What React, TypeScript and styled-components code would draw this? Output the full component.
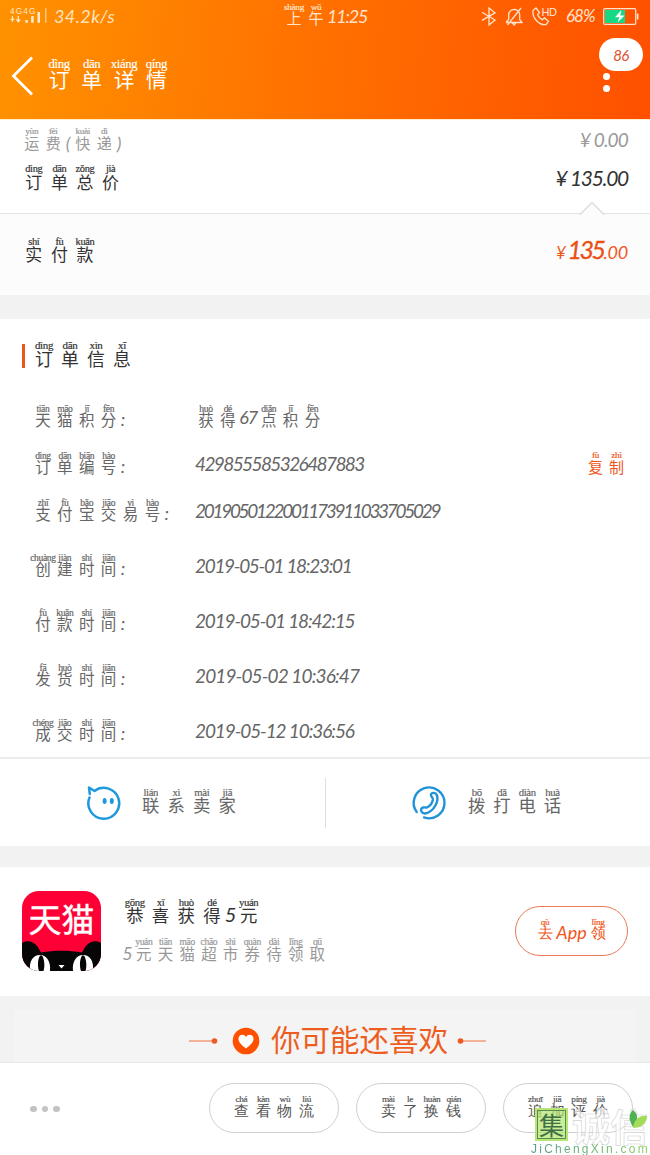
import React from "react";
import styled, { createGlobalStyle } from "styled-components";

const sans = `"Noto Sans CJK SC", "Liberation Sans", sans-serif`;
const numeric = `Lato, "Liberation Sans", sans-serif`;

const GlobalStyle = createGlobalStyle`
  * { box-sizing: border-box; }
  body { margin: 0; background: #f2f2f2; font-family: ${sans}; }
`;

/* ---------- annotated text ---------- */

const RubyLine = styled.span<{ $size: number; $color: string; $drop?: number }>`
  display: inline-flex;
  align-items: center;
  padding-top: ${(p) => p.$drop ?? 0}px;
  color: ${(p) => p.$color};
  font-size: ${(p) => p.$size}px;
  line-height: ${(p) => p.$size}px;
  font-weight: 400;
  white-space: nowrap;
`;

const Cell = styled.span<{ $pitch: number }>`
  display: inline-flex;
  flex-direction: column;
  align-items: center;
  width: ${(p) => p.$pitch}px;
`;

const Pinyin = styled.span<{ $size: number }>`
  font-family: "Liberation Serif", serif;
  font-size: ${(p) => p.$size * 0.58}px;
  line-height: ${(p) => p.$size * 0.6}px;
  margin-top: ${(p) => p.$size * -0.46}px;
  margin-bottom: ${(p) => p.$size * -0.14}px;
  letter-spacing: -0.35px;
  -webkit-text-stroke: 0.2px currentColor;
`;

const Hanzi = styled.span`
  font-size: 0.94em;
`;

const Plain = styled.span<{ $size?: number; $width?: number; $spacing?: number; $lift?: number }>`
  font-family: ${numeric};
  font-style: italic;
  text-align: center;
  font-size: ${(p) => p.$size ?? 18}px;
  width: ${(p) => (p.$width ? `${p.$width}px` : "auto")};
  letter-spacing: ${(p) => p.$spacing ?? 0}px;
  margin-bottom: ${(p) => p.$lift ?? 0}px;
`;

type Syllable = [string, string];

/* "订:dìng 单:dān" -> pairs of character and reading */
const parse = (text: string): Syllable[] =>
  text.split(" ").map((part) => part.split(":") as Syllable);

function Syllables({ text, size, pitch }: { text: string; size: number; pitch: number }) {
  return (
    <>
      {parse(text).map(([char, reading], i) => (
        <Cell key={i} $pitch={pitch}>
          <Pinyin $size={size}>{reading}</Pinyin>
          <Hanzi>{char}</Hanzi>
        </Cell>
      ))}
    </>
  );
}

function Ruby(props: { text: string; size: number; pitch: number; color: string }) {
  return (
    <RubyLine $size={props.size} $color={props.color}>
      <Syllables text={props.text} size={props.size} pitch={props.pitch} />
    </RubyLine>
  );
}

const Num = styled.span<{ $size: number; $color: string; $spacing?: number; $stroke?: number }>`
  font-family: ${numeric};
  font-style: italic;
  font-size: ${(p) => p.$size}px;
  line-height: 24px;
  color: ${(p) => p.$color};
  letter-spacing: ${(p) => p.$spacing ?? 0}px;
  -webkit-text-stroke: ${(p) => p.$stroke ?? 0}px currentColor;
  white-space: nowrap;
`;

/* ---------- page ---------- */

const Page = styled.main`
  position: relative;
  width: 650px;
  height: 1155px;
  overflow: hidden;
  display: flex;
  flex-direction: column;
  background: #f2f2f2;
`;

const Header = styled.header`
  height: 120px;
  flex: none;
  background: linear-gradient(96deg, #ff9200 0%, #ff7200 46%, #ff5000 100%);
  border-bottom: 1px solid #ffedcb;
  color: #fff;
`;

const StatusBar = styled.div`
  height: 32px;
  display: grid;
  grid-template-columns: 283px 198px 1fr;
  align-items: center;
  color: #ffe3bd;
`;

const StatusGroup = styled.div`
  display: flex;
  align-items: center;
  gap: 8px;
`;

const Network = styled(StatusGroup)`
  padding-left: 10px;
  gap: 5px;
`;

const TitleBar = styled.div`
  display: flex;
  align-items: center;
  height: 87px;
  padding: 0 40px 0 11px;
`;

const TitleText = styled.div`
  margin: 7px auto 0 9px;
  display: flex;
`;

const More = styled.div`
  display: flex;
  flex-direction: column;
  gap: 5px;
  margin-top: 13px;
`;

const MoreDot = styled.i`
  width: 7px;
  height: 7px;
  border-radius: 50%;
  background: #fff;
`;

const Badge = styled.div`
  position: absolute;
  left: 599px;
  top: 38px;
  width: 44px;
  height: 33px;
  border-radius: 17px;
  background: #fff;
  display: flex;
  align-items: center;
  justify-content: center;
`;

const Totals = styled.section`
  height: 93px;
  flex: none;
  background: #fff;
  padding: 4px 22px 0 21px;
`;

const PriceRow = styled.div<{ $height: number }>`
  display: flex;
  justify-content: space-between;
  align-items: center;
  height: ${(p) => p.$height}px;
`;

const RowLabel = styled.div<{ $shift?: number }>`
  display: flex;
  padding-top: ${(p) => p.$shift ?? 5}px;
`;

const Paid = styled.section`
  position: relative;
  height: 82px;
  flex: none;
  background: #fcfcfc;
  border-top: 1px solid #e2e2e2;
  padding: 0 22px 0 21px;
`;

const Notch = styled.svg`
  position: absolute;
  left: 579px;
  top: -13px;
`;

const Amount = styled.div`
  display: flex;
  align-items: baseline;
`;

const Info = styled.section`
  height: 440px;
  flex: none;
  margin-top: 24px;
  background: #fff;
  padding: 0 23px 0 22px;
  border-bottom: 2px solid #ececec;
`;

const InfoTitle = styled.h2`
  margin: 0 0 21px;
  padding-top: 17px;
  display: flex;
  align-items: center;
  gap: 6px;
  height: 56px;
`;

const Marker = styled.i`
  width: 3px;
  height: 24px;
  background: #f0531c;
`;

const InfoRow = styled.div<{ $height: number }>`
  display: grid;
  grid-template-columns: 163px 1fr auto;
  align-items: center;
  height: ${(p) => p.$height}px;
  padding-left: 10px;
`;

const TimeRows = styled.div`
  margin-top: 4px;
`;

const Value = styled.div`
  display: flex;
  padding-bottom: 5px;
`;

const Contact = styled.section`
  height: 87px;
  flex: none;
  background: #fff;
  display: grid;
  grid-template-columns: 1fr 1fr;
  align-items: center;
`;

const ContactItem = styled.div`
  display: flex;
  align-items: center;
  height: 50px;
  padding-left: 84px;
  gap: 16px;
  & + & { border-left: 1px solid #dfdfdf; }
`;

const Promo = styled.section`
  height: 129px;
  flex: none;
  margin-top: 21px;
  background: #fff;
  display: flex;
  align-items: center;
  padding: 0 22px 2px 22px;
`;

const AppIcon = styled.div`
  width: 79px;
  height: 80px;
  border-radius: 17px;
  overflow: hidden;
  background: #fe0036;
  display: flex;
  flex-direction: column;
  justify-content: space-between;
  align-items: center;
`;

const AppName = styled.span`
  color: #fff;
  font-size: 33px;
  line-height: 40px;
  padding-top: 7px;
  -webkit-text-stroke: 0.4px #fff;
`;

const PromoText = styled.div`
  flex: 1;
  display: flex;
  flex-direction: column;
  align-items: flex-start;
  gap: 19px;
  padding: 5px 0 0 21px;
`;

const Pill = styled.button<{ $width: number; $line: string }>`
  width: ${(p) => p.$width}px;
  height: 50px;
  padding: 5px 0 0;
  border: 1.5px solid ${(p) => p.$line};
  border-radius: 25px;
  background: #fff;
  display: flex;
  align-items: center;
  justify-content: center;
`;

const Suggest = styled.section`
  height: 66px;
  flex: none;
  padding: 14px 14px 0;
`;

const SuggestInner = styled.div`
  height: 52px;
  background: #f4f4f4;
  display: flex;
  align-items: center;
  justify-content: center;
  padding: 10px 0 0 25px;
`;

const SuggestLead = styled.span`
  display: flex;
  align-items: center;
  gap: 14px;
`;

const SuggestTitle = styled.h2`
  margin: 0 9px 6px 11px;
  font-size: 29.5px;
  line-height: 34px;
  font-weight: 400;
  color: #ee5c20;
`;

const BottomBar = styled.footer`
  height: 93px;
  flex: none;
  background: #fff;
  border-top: 1px solid #e8e8e8;
  display: flex;
  align-items: center;
  gap: 17px;
  padding: 0 17px 2px 30px;
`;

const Ellipsis = styled.div`
  display: flex;
  gap: 5px;
  margin: 2px auto 0 0;
  i { width: 6.5px; height: 6.5px; border-radius: 50%; background: #c3c3c3; }
`;

const Watermark = styled.div`
  position: absolute;
  left: 531px;
  top: 1106px;
  width: 119px;
  height: 49px;
`;

const MarkRow = styled.div`
  display: flex;
  align-items: center;
  height: 37px;
  padding-left: 4px;
`;

const MarkBox = styled.span`
  width: 33px;
  height: 33px;
  background: rgba(180, 228, 110, 0.72);
  box-shadow: inset 0 0 0 2px #b5e677, inset 0 0 0 3px #5c8a4c;
  color: #3f7045;
  font-size: 25px;
  line-height: 32px;
  text-align: center;
`;

const MarkText = styled.span`
  margin-left: 4px;
  font-size: 38px;
  line-height: 36px;
  font-weight: 700;
  color: rgba(255, 255, 255, 0.7);
  -webkit-text-stroke: 0.6px #d2d2d2;
`;

const Leaf = styled.svg`
  position: absolute;
  left: 97px;
  top: 3px;
`;

const MarkUrl = styled.div`
  font-family: "Liberation Sans", sans-serif;
  font-size: 12px;
  line-height: 13px;
  letter-spacing: 2.25px;
  background: linear-gradient(90deg, #5b9c8c, #6fb56b 60%, #8fcf60);
  background-clip: text;
  color: transparent;
  white-space: nowrap;
`;

/* ---------- icons ---------- */

const SignalIcon = () => (
  <svg width="39" height="18" viewBox="0 0 40 18" fill="none" stroke="#ffe9cc">
    <g fill="#ffe9cc" stroke="none" fontFamily="Liberation Sans, sans-serif" fontSize="8.5">
      <text x="0" y="6.5" textLength="26">4G4G</text>
    </g>
    <path d="M2.500 9v6M.500 12.500h4M8.500 9v6M6.500 12.500l2 2.500 2-2.500" strokeWidth="1.300" />
    <path d="M17 13v3M23 9v7M29.500 5v11" strokeWidth="2.600" />
    <path d="M36.700 1v15" strokeWidth="1.400" opacity=".7" />
  </svg>
);

const BluetoothIcon = () => (
  <svg width="16" height="19" viewBox="0 0 16 19" fill="none" stroke="#ffe3cc" strokeWidth="1.300">
    <path d="M1 5.200 14 13l-6 5V1l6 4.800L1 13.400" />
  </svg>
);

const MuteIcon = () => (
  <svg width="18" height="19" viewBox="0 0 18 19" fill="none" stroke="#ffe3cc" strokeWidth="1.300">
    <path d="M1 15.500h16l-2.300-3V8c0-3-2.200-5.500-5.400-5.700C6 2.400 3.700 5 3.700 8v4.500L1 15.500M7.500 16l1.600 2 1.600-2M16 1 2.500 18" />
  </svg>
);

const CallIcon = () => (
  <svg width="27" height="19" viewBox="0 0 27 19" fill="none" stroke="#ffe3cc" strokeWidth="1.300">
    <path d="M2 3.500 5 1l3.500 4.500L6.500 7.600c1 2.500 2.500 4 4.800 5.200l2.200-1.900 4 3.500-2.500 3.200C8.500 18.500.8 11 2 3.500z" />
    <text x="10.500" y="8.500" fontFamily="Liberation Sans, sans-serif" fontSize="11" textLength="15.500" fill="#ffe9dc" stroke="none">HD</text>
  </svg>
);

const BatteryIcon = () => (
  <svg width="36" height="17" viewBox="0 0 36 17">
    <rect x=".7" y=".7" width="32" height="15.600" rx="1" fill="none" stroke="#ffe3cc" strokeWidth="1.200" />
    <rect x="2" y="2" width="20" height="13" fill="#17d884" />
    <path d="M33.800 5.500h1.700v6h-1.700z" fill="#ffe3cc" />
    <path d="M18.500 2 12 9.300h4.300L14.500 14.500 21.500 7.400h-4.300z" fill="#fff" />
  </svg>
);

const BackIcon = () => (
  <svg width="23" height="40" viewBox="0 0 23 40" fill="none" stroke="#fff" strokeWidth="2.800">
    <path d="M21 1.500 2.500 20 21 38.500" />
  </svg>
);

const ChatIcon = () => (
  <svg width="38" height="38" viewBox="0 0 38 38" fill="none" stroke="#2099dc" strokeWidth="2.500">
    <path d="M5.500 13.500A15.400 15.400 0 1 0 10.500 7L5 3.500l.800 6.500" strokeLinejoin="round" strokeLinecap="round" />
    <ellipse cx="20.600" cy="17" rx="2" ry="3" fill="#2099dc" stroke="none" />
    <ellipse cx="27.800" cy="17" rx="2" ry="3" fill="#2099dc" stroke="none" />
  </svg>
);

const PhoneIcon = () => (
  <svg width="38" height="38" viewBox="0 0 38 38" fill="none" stroke="#2093d8" strokeWidth="2.400" strokeLinecap="round" strokeLinejoin="round">
    <path d="M6.700 28A15.400 15.400 0 1 1 14 33.400" />
    <path d="M21 11.500c-.8-2.600 4.300-4 5.700-.7 2.600 6-2.500 16.500-10.700 18.500-4.800.9-6.800-4.800-2.800-5.800 2.300-.5 3.100.7 4.600-.4 2.900-1.900 4.500-4.400 5.100-7.400.3-1.900-1.400-2.400-1.900-4.200z" />
  </svg>
);

const CatFace = () => (
  <svg width="79" height="30" viewBox="0 0 79 30">
    <path d="M0 30V2c4-3 10-2 13 1 3 2 4 5 6 8.500 13-2.500 28-2.500 41 0C62 8 63 5 66 3c3-3 9-4 13-1v28z" fill="#060606" />
    <g fill="#fff">
      <path d="M8 30C7 20 11 14 18 14s11 7 10 16zM51 30c-1-9 3-16 10-16s11 6 10 16z" />
      <path d="M36.500 24h6l-3 3.600z" />
    </g>
    <path d="M18 14.500c-2.500 4-2.500 11-1 15.500h4.500c1.500-5 1-11.500-1.500-15.500zM60 14.500c-2.500 4-2.500 11-1 15.500h4.500c1.500-5 1-11.500-1.500-15.500z" fill="#060606" />
  </svg>
);

const HeartIcon = () => (
  <svg width="28" height="28" viewBox="0 0 28 28">
    <circle cx="14" cy="14" r="13.300" fill="#ff5000" />
    <path d="M14 21.500C10 18.300 6.500 15.500 6.500 11.700c0-4.300 5.500-5.200 7.500-1.800 2-3.400 7.500-2.500 7.500 1.800 0 3.800-3.500 6.600-7.500 9.800z" fill="#fff" />
  </svg>
);

const Dash = ({ flip = false }: { flip?: boolean }) => (
  <svg width="29" height="8" viewBox="0 0 29 8" transform={flip ? "scale(-1 1)" : undefined}>
    <path d="M0 4h25" stroke="#f39b78" strokeWidth="1.500" />
    <circle cx="25.500" cy="4" r="2.800" fill="#ee5a22" />
  </svg>
);

/* ---------- data ---------- */

const GREY = "#666";
const ORANGE = "#f0561a";

const times = [
  { label: "创:chuàng 建:jiàn 时:shí 间:jiān", value: "2019-05-01 18:23:01", spacing: -1.32 },
  { label: "付:fù 款:kuǎn 时:shí 间:jiān", value: "2019-05-01 18:42:15", spacing: -1.16 },
  { label: "发:fā 货:huò 时:shí 间:jiān", value: "2019-05-02 10:36:47", spacing: -0.87 },
  { label: "成:chéng 交:jiāo 时:shí 间:jiān", value: "2019-05-12 10:36:56", spacing: -1.1 },
];

const actions = [
  "查:chá 看:kàn 物:wù 流:liú",
  "卖:mài 了:le 换:huàn 钱:qián",
  "追:zhuī 加:jiā 评:píng 价:jià",
];

const FieldLabel = ({ text }: { text: string }) => (
  <RubyLine $size={16.5} $color={GREY}>
    <Syllables text={text} size={16.5} pitch={21.9} />
    <Plain $width={7}>:</Plain>
  </RubyLine>
);

export default function App() {
  return (
    <Page>
      <GlobalStyle />
      <Header>
        <StatusBar>
          <Network>
            <SignalIcon />
            <Num $size={18} $color="#ffe3bd" $spacing={0.4}>34.2k/s</Num>
          </Network>
          <RubyLine $size={16} $color="#ffe3cc" $drop={4}>
            <Syllables text="上:shàng 午:wǔ" size={16} pitch={22} />
            <Plain $size={18} $spacing={-1.2} $lift={5}>11:25</Plain>
          </RubyLine>
          <StatusGroup>
            <BluetoothIcon />
            <MuteIcon />
            <CallIcon />
            <Num $size={17} $color="#ffe3cc" $spacing={-1}>68%</Num>
            <BatteryIcon />
          </StatusGroup>
        </StatusBar>
        <TitleBar>
          <BackIcon />
          <TitleText>
            <Ruby text="订:dìng 单:dān 详:xiáng 情:qíng" size={22} pitch={32.4} color="#fff" />
          </TitleText>
          <More>
            <MoreDot />
            <MoreDot />
          </More>
        </TitleBar>
        <Badge>
          <Num $size={15} $color="#e0532c" $spacing={-0.6}>86</Num>
        </Badge>
      </Header>

      <Totals>
        <PriceRow $height={32}>
          <RowLabel>
            <RubyLine $size={16} $color="#999">
              <Syllables text="运:yùn 费:fèi" size={16} pitch={21.5} />
              <Plain $width={8}>(</Plain>
              <Syllables text="快:kuài 递:dì" size={16} pitch={21.5} />
              <Plain $width={8}>)</Plain>
            </RubyLine>
          </RowLabel>
          <Num $size={19} $color="#999" $spacing={-0.8}>¥ 0.00</Num>
        </PriceRow>
        <PriceRow $height={44}>
          <RowLabel $shift={7}>
            <Ruby text="订:dìng 单:dān 总:zǒng 价:jià" size={18} pitch={25.6} color="#333" />
          </RowLabel>
          <Num $size={21} $color="#333" $spacing={-1.3}>¥ 135.00</Num>
        </PriceRow>
      </Totals>

      <Paid>
        <Notch width="26" height="14" viewBox="0 0 26 14">
          <path d="M1 13.500 13 1.500l12 12" fill="#fcfcfc" stroke="#d8d8d8" strokeWidth="1.200" />
        </Notch>
        <PriceRow $height={73}>
          <RowLabel $shift={7}>
            <Ruby text="实:shí 付:fù 款:kuǎn" size={18} pitch={25.6} color="#333" />
          </RowLabel>
          <Amount>
            <Num $size={17} $color={ORANGE} $spacing={1.5}>¥</Num>
            <Num $size={25} $color="#ea5014" $spacing={-2.5} $stroke={0.3}>135</Num>
            <Num $size={18} $color={ORANGE} $spacing={-0.2}>.00</Num>
          </Amount>
        </PriceRow>
      </Paid>

      <Info>
        <InfoTitle>
          <Marker />
          <RowLabel $shift={6}>
            <Ruby text="订:dìng 单:dān 信:xìn 息:xī" size={19} pitch={26} color="#333" />
          </RowLabel>
        </InfoTitle>
        <InfoRow $height={47}>
          <FieldLabel text="天:tiān 猫:māo 积:jī 分:fēn" />
          <RubyLine $size={16.5} $color={GREY}>
            <Syllables text="获:huò 得:dé" size={16.5} pitch={21.9} />
            <Plain $width={19} $lift={5} $spacing={-1}>67</Plain>
            <Syllables text="点:diǎn 积:jī 分:fēn" size={16.5} pitch={21.9} />
          </RubyLine>
        </InfoRow>
        <InfoRow $height={47}>
          <FieldLabel text="订:dìng 单:dān 编:biān 号:hào" />
          <Value><Num $size={19} $color={GREY} $spacing={-1.6}>429855585326487883</Num></Value>
          <Ruby text="复:fù 制:zhì" size={16} pitch={21} color={ORANGE} />
        </InfoRow>
        <InfoRow $height={47}>
          <FieldLabel text="支:zhī 付:fù 宝:bǎo 交:jiāo 易:yì 号:hào" />
          <Value><Num $size={19} $color={GREY} $spacing={-2.3}>2019050122001173911033705029</Num></Value>
        </InfoRow>
        <TimeRows>
          {times.map((row) => (
            <InfoRow key={row.label} $height={55}>
              <FieldLabel text={row.label} />
              <Value><Num $size={19} $color={GREY} $spacing={row.spacing}>{row.value}</Num></Value>
            </InfoRow>
          ))}
        </TimeRows>
      </Info>

      <Contact>
        <ContactItem>
          <ChatIcon />
          <RowLabel>
            <Ruby text="联:lián 系:xì 卖:mài 家:jiā" size={18.5} pitch={25.5} color={GREY} />
          </RowLabel>
        </ContactItem>
        <ContactItem>
          <PhoneIcon />
          <RowLabel>
            <Ruby text="拨:bō 打:dǎ 电:diàn 话:huà" size={18.5} pitch={25.3} color={GREY} />
          </RowLabel>
        </ContactItem>
      </Contact>

      <Promo>
        <AppIcon>
          <AppName>天猫</AppName>
          <CatFace />
        </AppIcon>
        <PromoText>
          <RubyLine $size={18.5} $color="#333">
            <Syllables text="恭:gōng 喜:xǐ 获:huò 得:dé" size={18.5} pitch={25.7} />
            <Plain $size={20} $width={11} $lift={2}>5</Plain>
            <Syllables text="元:yuán" size={18.5} pitch={25.7} />
          </RubyLine>
          <RubyLine $size={16.5} $color="#999">
            <Plain $size={18} $width={11}>5</Plain>
            <Syllables
              text="元:yuán 天:tiān 猫:māo 超:chāo 市:shì 券:quàn 待:dài 领:lǐng 取:qǔ"
              size={16.5}
              pitch={21.7}
            />
          </RubyLine>
        </PromoText>
        <Pill $width={113} $line="#ec7a54">
          <RubyLine $size={16} $color={ORANGE}>
            <Syllables text="去:qù" size={16} pitch={21} />
            <Plain $size={18} $width={32} $lift={3}>App</Plain>
            <Syllables text="领:lǐng" size={16} pitch={21} />
          </RubyLine>
        </Pill>
      </Promo>

      <Suggest>
        <SuggestInner>
          <SuggestLead>
            <Dash />
            <HeartIcon />
          </SuggestLead>
          <SuggestTitle>你可能还喜欢</SuggestTitle>
          <Dash flip />
        </SuggestInner>
      </Suggest>

      <BottomBar>
        <Ellipsis><i /><i /><i /></Ellipsis>
        {actions.map((text) => (
          <Pill key={text} $width={130} $line="#cfcfcf">
            <Ruby text={text} size={16} pitch={21.8} color="#555" />
          </Pill>
        ))}
      </BottomBar>

      <Watermark>
        <MarkRow>
          <MarkBox>集</MarkBox>
          <MarkText>诚信</MarkText>
        </MarkRow>
        <Leaf width="20" height="22" viewBox="0 0 20 22">
          <path d="M5 18C0 10 1 4 5 1c5 4 6 10 0 17z" fill="#52b153" />
          <path d="M5 19C6 11 11 6 19 7c0 8-6 12-14 12z" fill="#a2dc5a" />
        </Leaf>
        <MarkUrl>JiChengXin.com</MarkUrl>
      </Watermark>
    </Page>
  );
}
